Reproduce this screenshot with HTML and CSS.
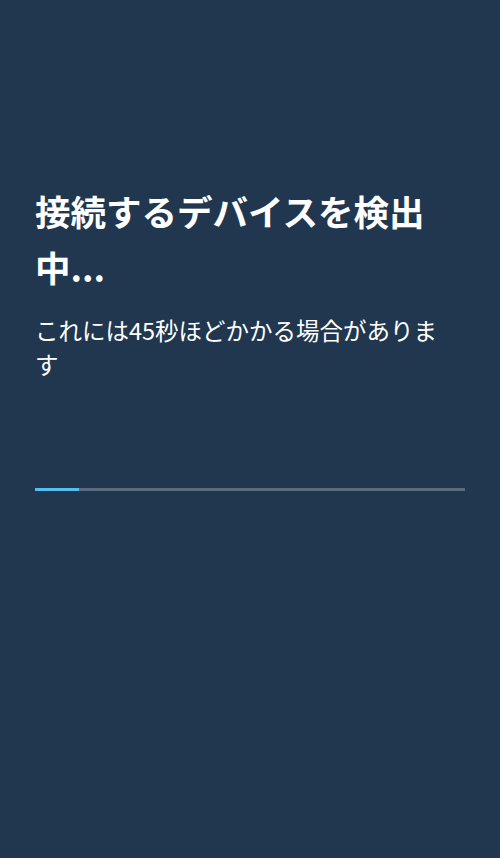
FILE: index.html
```html
<!DOCTYPE html>
<html lang="ja">
<head>
<meta charset="utf-8">
<link rel="stylesheet" href="styles.css">
</head>
<body>
<main class="screen">
  <div class="text-block">
    <h1 class="title">接続するデバイスを検出中...</h1>
    <p class="subtitle">これには45秒ほどかかる場合があります</p>
  </div>
  <div class="progress">
    <div class="progress-fill" style="width: 44px"></div>
  </div>
</main>
</body>
</html>
```
FILE: styles.css
```css
html, body {
  margin: 0;
  padding: 0;
  background: #20374f;
}
body {
  width: 500px;
  height: 858px;
  font-family: "Noto Sans CJK JP", "Noto Sans", sans-serif;
  color: #ffffff;
}
.screen {
  display: flex;
  flex-direction: column;
  padding: 183px 35px 0 35px;
}
.text-block {
  width: 410px;
}
.title {
  margin: 0;
  font-size: 35.5px;
  line-height: 56px;
  font-weight: 700;
}
.subtitle {
  margin: 18px 0 0 0;
  font-size: 23.5px;
  line-height: 34px;
  font-weight: 400;
}
.progress {
  margin-top: 107px;
  height: 3px;
  background: #5a6c80;
  display: flex;
}
.progress-fill {
  height: 100%;
  background: #55bdf0;
}
```
